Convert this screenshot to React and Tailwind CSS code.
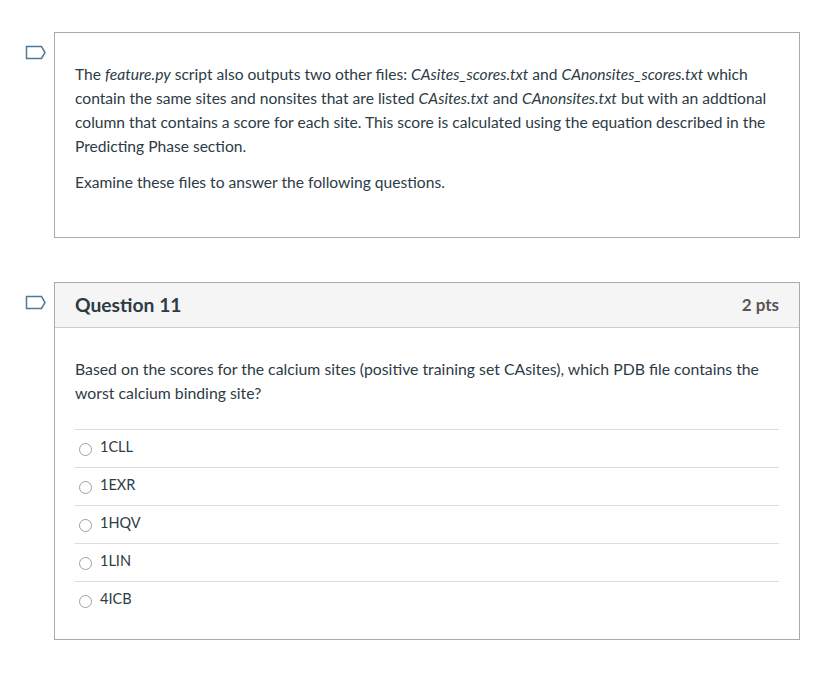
const Flag = () => (
  <svg width="22" height="16" viewBox="0 0 22 16" className="shrink-0">
    <path d="M1.5 1.5 H16.5 L20 7.5 L16.5 13.5 H1.5 Z" fill="none" stroke="#4d7a96" strokeWidth="1.5" strokeLinejoin="miter" />
  </svg>
);

const answers = ['1CLL', '1EXR', '1HQV', '1LIN', '4ICB'];

export default function App() {
  return (
    <div className="min-h-screen bg-white text-[#2d3b45] pt-8 pl-[25px]" style={{ fontFamily: 'Lato, "Open Sans", sans-serif' }}>
      <div className="flex items-start gap-[7px]">
        <div className="pt-[13px]">
          <Flag />
        </div>
        <div className="w-[746px] h-[206px] border border-[#aaaaaa] px-5 pt-[29px] text-[15.6px] leading-6">
          <p>
            The <em>feature.py</em> script also outputs two other files: <em>CAsites_scores.txt</em> and{' '}
            <em>CAnonsites_scores.txt</em> which contain the same sites and nonsites that are listed{' '}
            <em>CAsites.txt</em> and <em>CAnonsites.txt</em> but with an addtional column that contains a score for
            each site. This score is calculated using the equation described in the Predicting Phase section.
          </p>
          <p className="mt-3">Examine these files to answer the following questions.</p>
        </div>
      </div>

      <div className="flex items-start gap-[7px] mt-[44px]">
        <div className="pt-[13px]">
          <Flag />
        </div>
        <div className="w-[746px] h-[358px] border border-[#aaaaaa]">
          <div className="h-[45px] bg-[#f5f5f5] border-b border-[#c7cdd1] px-5 flex items-center justify-between">
            <h2 className="text-[19.3px] font-bold">Question 11</h2>
            <span className="text-[17px] font-bold text-[#555555]">2 pts</span>
          </div>
          <div className="px-5 pt-[29px] text-[15.8px] leading-6">
            <p>
              Based on the scores for the calcium sites (positive training set CAsites), which PDB file contains the
              worst calcium binding site?
            </p>
            <div className="mt-6">
              {answers.map((a) => (
                <label key={a} className="h-[38px] border-t border-[#dddddd] flex items-center gap-2 pl-1 text-[14.5px]">
                  <span className="w-[13px] h-[13px] rounded-full border border-[#a0a0a0] bg-white mt-[1px]" />
                  <span className="-mt-[4px]">{a}</span>
                </label>
              ))}
            </div>
          </div>
        </div>
      </div>
    </div>
  );
}
